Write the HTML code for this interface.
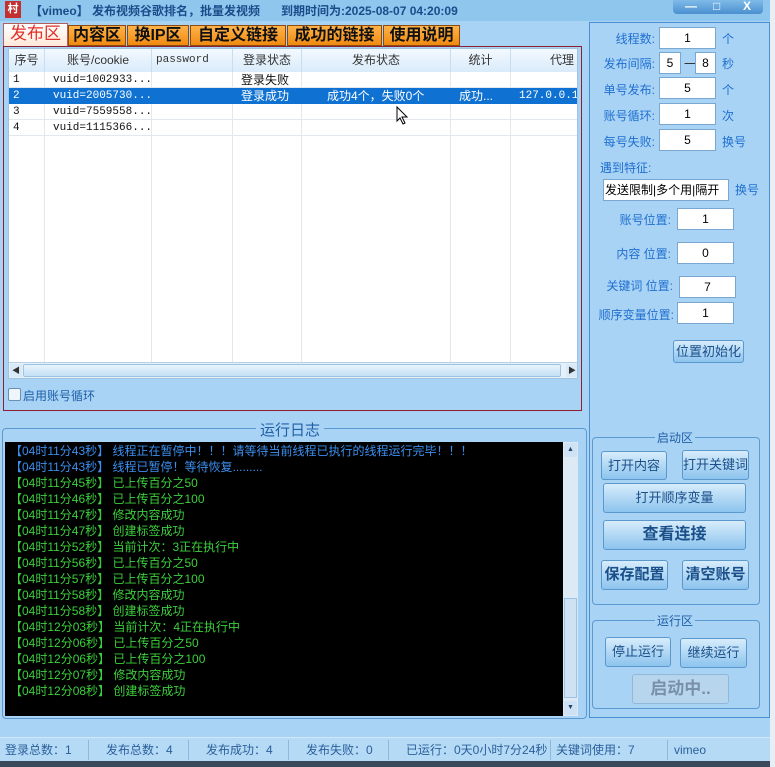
<!DOCTYPE html>
<html><head><meta charset="utf-8"><style>
*{margin:0;padding:0;box-sizing:border-box}
body{width:775px;height:767px;overflow:hidden;background:#a9d3f5;font-family:"Liberation Sans","Noto Sans CJK SC",sans-serif;font-size:12px;position:relative}
.a{position:absolute}
.tab{position:absolute;top:25px;height:21px;background:linear-gradient(#ffb34a,#f08a10);border:1px solid #8a4a10;font-size:16px;font-weight:bold;color:#111;line-height:19px;text-align:center}
.th{position:absolute;top:0;height:23px;line-height:23px;text-align:center;color:#333;border-right:1px solid #c8ddee;background:linear-gradient(#f3f9ff,#d9ebfa);font-size:12px}
.row{position:absolute;left:0;width:570px;height:16px;line-height:16px;font-family:"Liberation Mono","Noto Sans CJK SC",monospace;font-size:11px;color:#111}
.vl{position:absolute;top:23px;bottom:16px;width:1px;background:#e3e8ee}
.lb{position:absolute;color:#1f6fd0;font-size:12px;text-align:right;white-space:nowrap}
.in{position:absolute;background:#fff;border:1px solid #7aa7d0;text-align:center;font-size:12px;line-height:20px;height:22px;white-space:nowrap;overflow:hidden}
.btn{position:absolute;background:linear-gradient(#d7ecfb,#8cc4ee);border:1px solid #5b98cc;border-radius:3px;color:#1a4f8a;text-align:center;font-size:13px}
.log{position:absolute;left:10px;font-size:12px;white-space:nowrap;line-height:16px}
.st{position:absolute;top:740px;height:20px;line-height:20px;color:#2b5f9a;font-size:12px;border-right:1px solid #8db8dd;padding-left:5px}
</style></head><body>
<div class="a" style="left:0;top:0;width:775px;height:21px;background:#8fc6ee"></div>
<div class="a" style="left:5px;top:1px;width:16px;height:17px;background:#c43030;color:#fff;font-size:11px;text-align:center;line-height:17px;font-weight:bold">村</div>
<div class="a" style="left:30px;top:2px;color:#1b4c8a;font-size:12px;font-weight:bold">【vimeo】 发布视频谷歌排名，批量发视频</div>
<div class="a" style="left:281px;top:2px;color:#1b4c8a;font-size:12px;font-weight:bold">到期时间为:2025-08-07 04:20:09</div>
<div class="a" style="left:673px;top:0;width:90px;height:14px;background:linear-gradient(#7fbbe8,#4b8fcf);border-radius:0 0 4px 4px;color:#fff;font-weight:bold;font-size:12px;line-height:12px">
<span class="a" style="left:12px">—</span><span class="a" style="left:40px">□</span><span class="a" style="left:70px">X</span></div>

<div class="tab" style="left:3px;top:23px;width:65px;height:24px;background:linear-gradient(#fff,#ffe8d8);color:#e0302a;font-size:17px;font-weight:normal;border-color:#b06060">发布区</div>
<div class="tab" style="left:68px;width:58px">内容区</div>
<div class="tab" style="left:127px;width:62px">换IP区</div>
<div class="tab" style="left:190px;width:96px">自定义链接</div>
<div class="tab" style="left:287px;width:95px">成功的链接</div>
<div class="tab" style="left:383px;width:77px">使用说明</div>

<div class="a" style="left:3px;top:46px;width:579px;height:365px;border:1px solid #8a2030"></div>
<div class="a" style="left:8px;top:48px;width:570px;height:331px;background:#fff;border:1px solid #9fc3e0;overflow:hidden">
<div class="th" style="left:0;width:36px">序号</div>
<div class="th" style="left:36px;width:107px">账号/cookie</div>
<div class="th" style="left:143px;width:81px;text-align:left;padding-left:4px;font-family:'Liberation Mono',monospace;font-size:11px">password</div>
<div class="th" style="left:224px;width:69px">登录状态</div>
<div class="th" style="left:293px;width:149px">发布状态</div>
<div class="th" style="left:442px;width:60px">统计</div>
<div class="th" style="left:502px;width:70px;text-align:right;padding-right:6px">代理</div>
<div class="vl" style="left:35px"></div><div class="vl" style="left:142px"></div><div class="vl" style="left:223px"></div><div class="vl" style="left:292px"></div><div class="vl" style="left:441px"></div><div class="vl" style="left:501px"></div>
<div class="row" style="top:23px;border-bottom:1px solid #e3e8ee"><span class="a" style="left:4px">1</span><span class="a" style="left:44px">vuid=1002933...</span><span class="a" style="left:232px;font-family:'Liberation Sans','Noto Sans CJK SC';font-size:12px">登录失败</span></div>
<div class="row" style="top:39px;background:#0f72d2;color:#fff"><span class="a" style="left:4px">2</span><span class="a" style="left:44px">vuid=2005730...</span><span class="a" style="left:232px;font-family:'Liberation Sans','Noto Sans CJK SC';font-size:12px">登录成功</span><span class="a" style="left:318px;font-family:'Liberation Sans','Noto Sans CJK SC';font-size:12px">成功4个，失败0个</span><span class="a" style="left:450px;font-family:'Liberation Sans','Noto Sans CJK SC';font-size:12px">成功...</span><span class="a" style="left:510px">127.0.0.1:</span></div>
<div class="row" style="top:55px;border-bottom:1px solid #e3e8ee"><span class="a" style="left:4px">3</span><span class="a" style="left:44px">vuid=7559558...</span></div>
<div class="row" style="top:71px;border-bottom:1px solid #e3e8ee"><span class="a" style="left:4px">4</span><span class="a" style="left:44px">vuid=1115366...</span></div>
<div class="a" style="left:0;bottom:0;width:570px;height:16px;background:#e6f0f8;border-top:1px solid #b8d0e6">
<div class="a" style="left:1px;top:1px;width:12px;height:13px;background:#d8e9f8;font-size:8px;color:#333;text-align:center;line-height:13px">◀</div>
<div class="a" style="left:14px;top:1px;width:538px;height:13px;background:linear-gradient(#e8f4fd,#c3dff5);border:1px solid #9cc3e3;border-radius:2px"></div>
<div class="a" style="right:1px;top:1px;width:12px;height:13px;background:#d8e9f8;font-size:8px;color:#333;text-align:center;line-height:13px">▶</div></div>
</div>
<svg class="a" style="left:396px;top:106px" width="14" height="20"><path d="M1 1 L1 15 L4 12 L7 18 L9 17 L6 11 L11 11 Z" fill="#fff" stroke="#000"/></svg>
<div class="a" style="left:8px;top:388px;width:13px;height:13px;border:1px solid #6a8fb0;background:#eef5fb;border-radius:2px"></div>
<div class="a" style="left:23px;top:387px;color:#1f5fa8;font-size:12px">启用账号循环</div>

<div class="a" style="left:2px;top:428px;width:585px;height:291px;border:1px solid #5a9ad0;border-radius:4px"></div>
<div class="a" style="left:256px;top:419px;background:#a9d3f5;padding:0 4px;color:#1f5fa8;font-size:15px">运行日志</div>
<div class="a" style="left:5px;top:442px;width:558px;height:274px;background:#000"></div>
<div class="a" style="left:563px;top:442px;width:15px;height:274px;background:#dde9f4">
<div class="a" style="left:1px;top:1px;width:13px;height:14px;background:#cfe2f3;font-size:7px;text-align:center;line-height:14px;color:#246">▲</div>
<div class="a" style="left:1px;top:156px;width:13px;height:100px;background:#cfe2f3;border:1px solid #9cc3e3"></div>
<div class="a" style="left:1px;bottom:1px;width:13px;height:14px;background:#cfe2f3;font-size:7px;text-align:center;line-height:14px;color:#246">▼</div></div>
<div class="log" style="top:443px;color:#3b8ff0">【04时11分43秒】 线程正在暂停中！！！请等待当前线程已执行的线程运行完毕！！！</div>
<div class="log" style="top:459px;color:#3b8ff0">【04时11分43秒】 线程已暂停！等待恢复.........</div>
<div style="color:#3ccf3c">
<div class="log" style="top:475px">【04时11分45秒】 已上传百分之50</div>
<div class="log" style="top:491px">【04时11分46秒】 已上传百分之100</div>
<div class="log" style="top:507px">【04时11分47秒】 修改内容成功</div>
<div class="log" style="top:523px">【04时11分47秒】 创建标签成功</div>
<div class="log" style="top:539px">【04时11分52秒】 当前计次：3正在执行中</div>
<div class="log" style="top:555px">【04时11分56秒】 已上传百分之50</div>
<div class="log" style="top:571px">【04时11分57秒】 已上传百分之100</div>
<div class="log" style="top:587px">【04时11分58秒】 修改内容成功</div>
<div class="log" style="top:603px">【04时11分58秒】 创建标签成功</div>
<div class="log" style="top:619px">【04时12分03秒】 当前计次：4正在执行中</div>
<div class="log" style="top:635px">【04时12分06秒】 已上传百分之50</div>
<div class="log" style="top:651px">【04时12分06秒】 已上传百分之100</div>
<div class="log" style="top:667px">【04时12分07秒】 修改内容成功</div>
<div class="log" style="top:683px">【04时12分08秒】 创建标签成功</div>
</div>

<div class="a" style="left:589px;top:22px;width:181px;height:696px;border:1px solid #4a90d0"></div>
<div class="lb" style="left:585px;top:30px;width:70px">线程数:</div><div class="in" style="left:659px;top:27px;width:57px">1</div><div class="lb" style="left:722px;top:30px">个</div>
<div class="lb" style="left:585px;top:55px;width:70px">发布间隔:</div><div class="in" style="left:659px;top:52px;width:22px">5</div><div class="a" style="left:684px;top:55px;color:#333">一</div><div class="in" style="left:695px;top:52px;width:21px">8</div><div class="lb" style="left:722px;top:55px">秒</div>
<div class="lb" style="left:585px;top:81px;width:70px">单号发布:</div><div class="in" style="left:659px;top:77px;width:57px">5</div><div class="lb" style="left:722px;top:81px">个</div>
<div class="lb" style="left:585px;top:107px;width:70px">账号循环:</div><div class="in" style="left:659px;top:103px;width:57px">1</div><div class="lb" style="left:722px;top:107px">次</div>
<div class="lb" style="left:585px;top:133px;width:70px">每号失败:</div><div class="in" style="left:659px;top:129px;width:57px">5</div><div class="lb" style="left:722px;top:133px">换号</div>
<div class="lb" style="left:600px;top:159px">遇到特征:</div>
<div class="in" style="left:603px;top:179px;width:126px;text-align:left;padding-left:1px;font-size:12px;color:#000">发送限制|多个用|隔开</div><div class="lb" style="left:735px;top:181px">换号</div>
<div class="lb" style="left:585px;top:211px;width:86px">账号位置:</div><div class="in" style="left:677px;top:208px;width:57px">1</div>
<div class="lb" style="left:585px;top:245px;width:86px">内容 位置:</div><div class="in" style="left:677px;top:242px;width:57px">0</div>
<div class="lb" style="left:585px;top:277px;width:88px">关键词 位置:</div><div class="in" style="left:679px;top:276px;width:57px">7</div>
<div class="lb" style="left:585px;top:306px;width:89px">顺序变量位置:</div><div class="in" style="left:677px;top:302px;width:57px">1</div>
<div class="btn" style="left:673px;top:340px;width:71px;height:23px;line-height:21px">位置初始化</div>

<div class="a" style="left:592px;top:437px;width:168px;height:168px;border:1px solid #5a9ad0;border-radius:4px"></div>
<div class="a" style="left:655px;top:429px;background:#a9d3f5;padding:0 2px;color:#1f5fa8">启动区</div>
<div class="btn" style="left:601px;top:451px;width:66px;height:29px;line-height:27px">打开内容</div>
<div class="btn" style="left:682px;top:450px;width:67px;height:30px;line-height:28px">打开关键词</div>
<div class="btn" style="left:603px;top:483px;width:143px;height:30px;line-height:28px">打开顺序变量</div>
<div class="btn" style="left:603px;top:520px;width:143px;height:30px;line-height:28px;font-size:16px;font-weight:bold">查看连接</div>
<div class="btn" style="left:601px;top:560px;width:67px;height:30px;line-height:28px;font-size:15px;font-weight:bold">保存配置</div>
<div class="btn" style="left:682px;top:560px;width:67px;height:30px;line-height:28px;font-size:15px;font-weight:bold">清空账号</div>
<div class="a" style="left:592px;top:620px;width:168px;height:89px;border:1px solid #5a9ad0;border-radius:4px"></div>
<div class="a" style="left:655px;top:612px;background:#a9d3f5;padding:0 2px;color:#1f5fa8">运行区</div>
<div class="btn" style="left:605px;top:637px;width:66px;height:30px;line-height:28px">停止运行</div>
<div class="btn" style="left:680px;top:638px;width:67px;height:30px;line-height:28px">继续运行</div>
<div class="a" style="left:632px;top:674px;width:97px;height:30px;background:#b7d6ee;border:1px solid #8fb8da;border-radius:3px;color:#7990a8;font-size:17px;font-weight:bold;text-align:center;line-height:28px">启动中..</div>

<div class="a" style="left:0;top:737px;width:770px;height:24px;background:#b5daf6;border-top:1px solid #d0e8fa"></div>
<div class="st" style="left:0;width:89px">登录总数：1</div>
<div class="st" style="left:101px;width:88px">发布总数：4</div>
<div class="st" style="left:201px;width:88px">发布成功：4</div>
<div class="st" style="left:301px;width:88px">发布失败：0</div>
<div class="st" style="left:401px;width:150px">已运行：0天0小时7分24秒</div>
<div class="st" style="left:551px;width:117px">关键词使用：7</div>
<div class="st" style="left:669px;border:none">vimeo</div>
<div class="a" style="left:0;top:761px;width:775px;height:6px;background:#3a4a5a"></div>
<div class="a" style="left:770px;top:0;width:5px;height:767px;background:#e8eef4"></div>
</body></html>
